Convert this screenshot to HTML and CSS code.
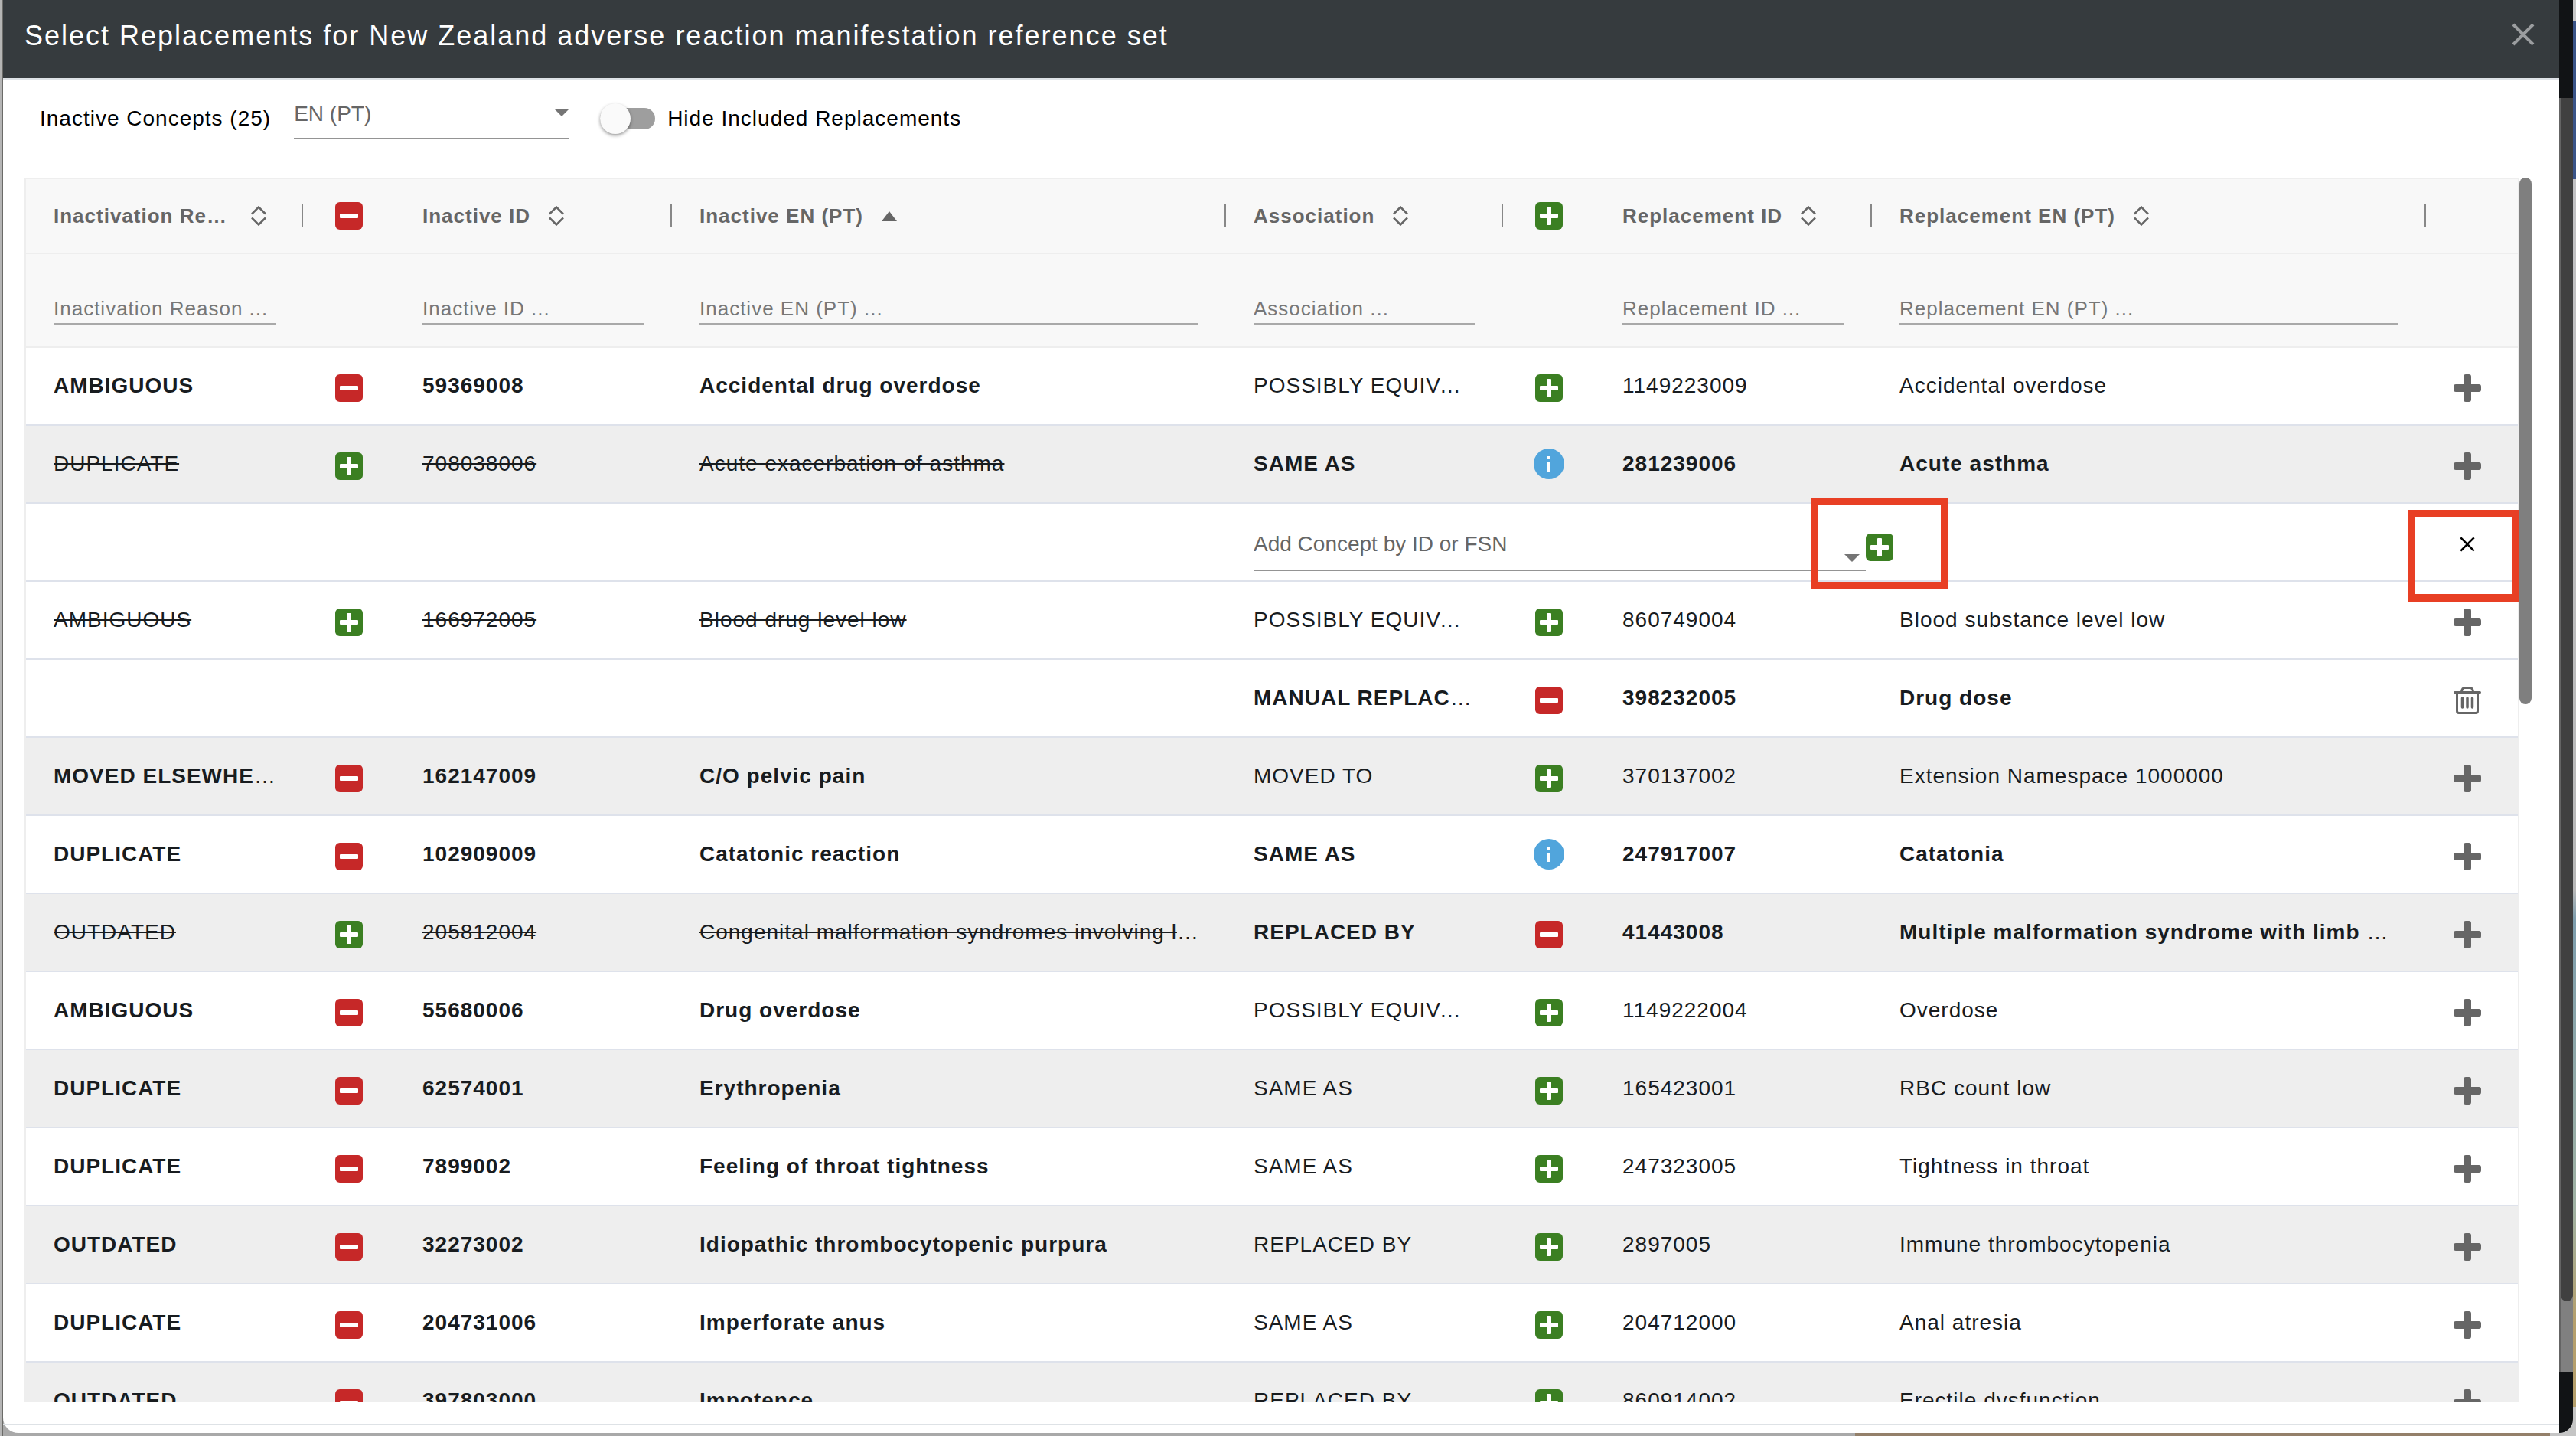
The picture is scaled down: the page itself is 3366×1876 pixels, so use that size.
FILE: index.html
```
<!DOCTYPE html>
<html lang="en">
<head>
  <meta charset="utf-8">
  <title>Select Replacements</title>
  <link rel="stylesheet" href="styles.css">
</head>
<body>
  <svg class="sprite" aria-hidden="true">
    <symbol id="minus-square" viewBox="0 0 36 36">
      <rect width="36" height="36" rx="6" fill="#c62828"/>
      <rect x="6" y="15" width="24" height="6" rx="1" fill="#fff"/>
    </symbol>
    <symbol id="plus-square" viewBox="0 0 36 36">
      <rect width="36" height="36" rx="6" fill="#3b7f22"/>
      <path d="M15 7q0-1 1-1h4q1 0 1 1v8h8q1 0 1 1v4q0 1-1 1h-8v8q0 1-1 1h-4q-1 0-1-1v-8H7q-1 0-1-1v-4q0-1 1-1h8z" fill="#fff"/>
    </symbol>
    <symbol id="info" viewBox="0 0 40 40">
      <circle cx="20" cy="20" r="20" fill="#51a5dc"/>
      <path d="M18 10h4v4h-4zM18 18h4v12h-4z" fill="#fff"/>
    </symbol>
    <symbol id="plus" viewBox="0 0 36 36">
      <path d="M13 3q0-3 3-3h4q3 0 3 3v10h10q3 0 3 3v4q0 3-3 3H23v10q0 3-3 3h-4q-3 0-3-3V23H3q-3 0-3-3v-4q0-3 3-3h10z" fill="#666"/>
    </symbol>
    <symbol id="trash" viewBox="0 0 36 36">
      <path d="M1.500 7.500h33M4.500 8v24q0 2.500 2.500 2.500h22q2.500 0 2.500-2.500V8M10.500 7q.5-5.500 4-5.500h7q3.500 0 4 5.500" fill="none" stroke="#666" stroke-width="3" stroke-linecap="round"/>
      <path d="M11.500 15v12M18 15v12M24.500 15v12" stroke="#666" stroke-width="3.500" stroke-linecap="round"/>
    </symbol>
    <symbol id="sort" viewBox="0 0 20 26">
      <path d="M1 10.500l9-9 9 9M1 15.500l9 9 9-9" fill="none" stroke="#666" stroke-width="2.500"/>
    </symbol>
    <symbol id="sort-asc" viewBox="0 0 20 26">
      <path d="M0 20L10 7l10 13z" fill="#666"/>
    </symbol>
    <symbol id="cross" viewBox="0 0 30 30">
      <path d="M2 2l26 26M28 2L2 28" fill="none" stroke="currentColor" stroke-width="4"/>
    </symbol>
  </svg>

  <div class="modal">
    <header class="modal-header">
      <h1>Select Replacements for New Zealand adverse reaction manifestation reference set</h1>
      <button class="close" aria-label="Close"><svg><use href="#cross"/></svg></button>
    </header>

    <div class="modal-body">
      <div class="toolbar">
        <label for="language">Inactive Concepts (25)</label>
        <select id="language" class="field language">
          <option>EN (PT)</option>
        </select>
        <label class="toggle"><input type="checkbox"> Hide Included Replacements</label>
      </div>

      <div class="table-wrap">
        <table>
          <colgroup>
            <col class="c-text"><col class="c-icon"><col class="c-text"><col>
            <col class="c-text"><col class="c-icon"><col class="c-text"><col><col class="c-icon">
          </colgroup>
          <thead>
            <tr class="titles">
              <th class="sep"><div><span>Inactivation Reason</span><svg><use href="#sort"/></svg></div></th>
              <th class="icon"><svg class="i"><use href="#minus-square"/></svg></th>
              <th class="sep"><div><span>Inactive ID</span><svg><use href="#sort"/></svg></div></th>
              <th class="sep"><div><span>Inactive EN (PT)</span><svg><use href="#sort-asc"/></svg></div></th>
              <th class="sep"><div><span>Association</span><svg><use href="#sort"/></svg></div></th>
              <th class="icon"><svg class="i"><use href="#plus-square"/></svg></th>
              <th class="sep"><div><span>Replacement ID</span><svg><use href="#sort"/></svg></div></th>
              <th class="sep"><div><span>Replacement EN (PT)</span><svg><use href="#sort"/></svg></div></th>
              <th></th>
            </tr>
            <tr class="filters">
              <th><input type="text" aria-label="Inactivation Reason" placeholder="Inactivation Reason ..."></th>
              <th></th>
              <th><input type="text" aria-label="Inactive ID" placeholder="Inactive ID ..."></th>
              <th><input type="text" aria-label="Inactive EN (PT)" placeholder="Inactive EN (PT) ..."></th>
              <th><input type="text" aria-label="Association" placeholder="Association ..."></th>
              <th></th>
              <th><input type="text" aria-label="Replacement ID" placeholder="Replacement ID ..."></th>
              <th><input type="text" aria-label="Replacement EN (PT)" placeholder="Replacement EN (PT) ..."></th>
              <th></th>
            </tr>
          </thead>
          <tbody>
            <tr>
              <td><b>AMBIGUOUS</b></td>
              <td class="icon"><button aria-label="Remove"><svg class="i"><use href="#minus-square"/></svg></button></td>
              <td><b>59369008</b></td>
              <td><b>Accidental drug overdose</b></td>
              <td>POSSIBLY EQUIVALENT TO</td>
              <td class="icon"><button aria-label="Include"><svg class="i"><use href="#plus-square"/></svg></button></td>
              <td>1149223009</td>
              <td>Accidental overdose</td>
              <td class="action"><button aria-label="Add replacement"><svg class="i"><use href="#plus"/></svg></button></td>
            </tr>
            <tr class="alt">
              <td><s>DUPLICATE</s></td>
              <td class="icon"><button aria-label="Include"><svg class="i"><use href="#plus-square"/></svg></button></td>
              <td><s>708038006</s></td>
              <td><s>Acute exacerbation of asthma</s></td>
              <td><b>SAME AS</b></td>
              <td class="icon"><svg class="info"><use href="#info"/></svg></td>
              <td><b>281239006</b></td>
              <td><b>Acute asthma</b></td>
              <td class="action"><button aria-label="Add replacement"><svg class="i"><use href="#plus"/></svg></button></td>
            </tr>
            <tr class="adding">
              <td></td>
              <td></td>
              <td></td>
              <td></td>
              <td colspan="4">
                <div class="add-concept">
                  <select class="field" aria-label="Add Concept by ID or FSN">
                    <option>Add Concept by ID or FSN</option>
                  </select>
                  <button aria-label="Add concept"><svg class="i"><use href="#plus-square"/></svg></button>
                  <span class="highlight highlight-add"></span>
                </div>
              </td>
              <td class="action">
                <button class="cancel" aria-label="Cancel"><svg><use href="#cross"/></svg></button>
                <span class="highlight highlight-cancel"></span>
              </td>
            </tr>
            <tr>
              <td><s>AMBIGUOUS</s></td>
              <td class="icon"><button aria-label="Include"><svg class="i"><use href="#plus-square"/></svg></button></td>
              <td><s>166972005</s></td>
              <td><s>Blood drug level low</s></td>
              <td>POSSIBLY EQUIVALENT TO</td>
              <td class="icon"><button aria-label="Include"><svg class="i"><use href="#plus-square"/></svg></button></td>
              <td>860749004</td>
              <td>Blood substance level low</td>
              <td class="action"><button aria-label="Add replacement"><svg class="i"><use href="#plus"/></svg></button></td>
            </tr>
            <tr>
              <td></td>
              <td></td>
              <td></td>
              <td></td>
              <td><b>MANUAL REPLACEMENT</b></td>
              <td class="icon"><button aria-label="Remove"><svg class="i"><use href="#minus-square"/></svg></button></td>
              <td><b>398232005</b></td>
              <td><b>Drug dose</b></td>
              <td class="action"><button aria-label="Delete"><svg class="i"><use href="#trash"/></svg></button></td>
            </tr>
            <tr class="alt">
              <td><b>MOVED ELSEWHERE</b></td>
              <td class="icon"><button aria-label="Remove"><svg class="i"><use href="#minus-square"/></svg></button></td>
              <td><b>162147009</b></td>
              <td><b>C/O pelvic pain</b></td>
              <td>MOVED TO</td>
              <td class="icon"><button aria-label="Include"><svg class="i"><use href="#plus-square"/></svg></button></td>
              <td>370137002</td>
              <td>Extension Namespace 1000000</td>
              <td class="action"><button aria-label="Add replacement"><svg class="i"><use href="#plus"/></svg></button></td>
            </tr>
            <tr>
              <td><b>DUPLICATE</b></td>
              <td class="icon"><button aria-label="Remove"><svg class="i"><use href="#minus-square"/></svg></button></td>
              <td><b>102909009</b></td>
              <td><b>Catatonic reaction</b></td>
              <td><b>SAME AS</b></td>
              <td class="icon"><svg class="info"><use href="#info"/></svg></td>
              <td><b>247917007</b></td>
              <td><b>Catatonia</b></td>
              <td class="action"><button aria-label="Add replacement"><svg class="i"><use href="#plus"/></svg></button></td>
            </tr>
            <tr class="alt">
              <td><s>OUTDATED</s></td>
              <td class="icon"><button aria-label="Include"><svg class="i"><use href="#plus-square"/></svg></button></td>
              <td><s>205812004</s></td>
              <td><s>Congenital malformation syndromes involving limbs</s></td>
              <td><b>REPLACED BY</b></td>
              <td class="icon"><button aria-label="Remove"><svg class="i"><use href="#minus-square"/></svg></button></td>
              <td><b>41443008</b></td>
              <td><b>Multiple malformation syndrome with limb defect</b></td>
              <td class="action"><button aria-label="Add replacement"><svg class="i"><use href="#plus"/></svg></button></td>
            </tr>
            <tr>
              <td><b>AMBIGUOUS</b></td>
              <td class="icon"><button aria-label="Remove"><svg class="i"><use href="#minus-square"/></svg></button></td>
              <td><b>55680006</b></td>
              <td><b>Drug overdose</b></td>
              <td>POSSIBLY EQUIVALENT TO</td>
              <td class="icon"><button aria-label="Include"><svg class="i"><use href="#plus-square"/></svg></button></td>
              <td>1149222004</td>
              <td>Overdose</td>
              <td class="action"><button aria-label="Add replacement"><svg class="i"><use href="#plus"/></svg></button></td>
            </tr>
            <tr class="alt">
              <td><b>DUPLICATE</b></td>
              <td class="icon"><button aria-label="Remove"><svg class="i"><use href="#minus-square"/></svg></button></td>
              <td><b>62574001</b></td>
              <td><b>Erythropenia</b></td>
              <td>SAME AS</td>
              <td class="icon"><button aria-label="Include"><svg class="i"><use href="#plus-square"/></svg></button></td>
              <td>165423001</td>
              <td>RBC count low</td>
              <td class="action"><button aria-label="Add replacement"><svg class="i"><use href="#plus"/></svg></button></td>
            </tr>
            <tr>
              <td><b>DUPLICATE</b></td>
              <td class="icon"><button aria-label="Remove"><svg class="i"><use href="#minus-square"/></svg></button></td>
              <td><b>7899002</b></td>
              <td><b>Feeling of throat tightness</b></td>
              <td>SAME AS</td>
              <td class="icon"><button aria-label="Include"><svg class="i"><use href="#plus-square"/></svg></button></td>
              <td>247323005</td>
              <td>Tightness in throat</td>
              <td class="action"><button aria-label="Add replacement"><svg class="i"><use href="#plus"/></svg></button></td>
            </tr>
            <tr class="alt">
              <td><b>OUTDATED</b></td>
              <td class="icon"><button aria-label="Remove"><svg class="i"><use href="#minus-square"/></svg></button></td>
              <td><b>32273002</b></td>
              <td><b>Idiopathic thrombocytopenic purpura</b></td>
              <td>REPLACED BY</td>
              <td class="icon"><button aria-label="Include"><svg class="i"><use href="#plus-square"/></svg></button></td>
              <td>2897005</td>
              <td>Immune thrombocytopenia</td>
              <td class="action"><button aria-label="Add replacement"><svg class="i"><use href="#plus"/></svg></button></td>
            </tr>
            <tr>
              <td><b>DUPLICATE</b></td>
              <td class="icon"><button aria-label="Remove"><svg class="i"><use href="#minus-square"/></svg></button></td>
              <td><b>204731006</b></td>
              <td><b>Imperforate anus</b></td>
              <td>SAME AS</td>
              <td class="icon"><button aria-label="Include"><svg class="i"><use href="#plus-square"/></svg></button></td>
              <td>204712000</td>
              <td>Anal atresia</td>
              <td class="action"><button aria-label="Add replacement"><svg class="i"><use href="#plus"/></svg></button></td>
            </tr>
            <tr class="alt">
              <td><b>OUTDATED</b></td>
              <td class="icon"><button aria-label="Remove"><svg class="i"><use href="#minus-square"/></svg></button></td>
              <td><b>397803000</b></td>
              <td><b>Impotence</b></td>
              <td>REPLACED BY</td>
              <td class="icon"><button aria-label="Include"><svg class="i"><use href="#plus-square"/></svg></button></td>
              <td>860914002</td>
              <td>Erectile dysfunction</td>
              <td class="action"><button aria-label="Add replacement"><svg class="i"><use href="#plus"/></svg></button></td>
            </tr>
          </tbody>
        </table>
        <div class="thumb"></div>
      </div>
    </div>
    <footer class="modal-footer"></footer>
  </div>
  <div class="page-scroll"><div class="page-track"><div class="page-thumb"></div></div></div>
</body>
</html>
```
FILE: styles.css
```
* {
  box-sizing: border-box;
}

body {
  margin: 0;
  height: 100vh;
  display: flex;
  overflow: hidden;
  padding: 0 4px 4px;
  /* what shows round the dialog: left edge, right edge, bottom edge */
  background:
    linear-gradient(90deg, #b5b5b5 50%, #6b6b68 50%) left / 4px 100% no-repeat,
    linear-gradient(#c8c8c8 1.5%, #3a5488 1.5%, #3a5488 12.5%, #c2c2c4 12.5%, #b8b8b8 62%, #7d9dad 64%, #a0b2a4 84%, #b59f6c 92%, #b59f6c 98%, #c5c5c5 98%) right / 4px 100% no-repeat,
    linear-gradient(90deg, #a9a9a9 72%, #94806a 72%, #94806a 99%, #c5c5c5 99%);
  color: #181c1f;
  font-family: "Helvetica Neue", "Liberation Sans", Arial, sans-serif;
  font-size: 28px;
}

button {
  display: block;
  padding: 0;
  border: none;
  background: none;
  color: inherit;
  cursor: pointer;
}

svg {
  display: block;
}

.sprite {
  position: absolute;
  width: 0;
  height: 0;
}

.i {
  width: 36px;
  height: 36px;
}

.info {
  width: 40px;
  height: 40px;
}

/* dialog */

.modal {
  flex: 1;
  min-width: 0;
  display: flex;
  flex-direction: column;
  background: #fff;
  border-bottom-left-radius: 20px;
}

.modal-header {
  display: flex;
  justify-content: space-between;
  align-items: center;
  height: 104px;
  padding: 0 32px 8px 28px;
  background: #363b3e;
  border-bottom: 2px solid #dee2e6;
  color: #fff;
}

.modal-header h1 {
  margin: 0;
  font-size: 36px;
  font-weight: normal;
  letter-spacing: 2px;
}

.close {
  margin-bottom: 4px;
  color: #9b9d9f;
}

.close svg {
  width: 30px;
  height: 30px;
}

.modal-body {
  flex: 1;
  min-height: 0;
  display: flex;
  flex-direction: column;
  padding: 0 36px 28px 28px;
}

.modal-footer {
  height: 12px;
  border-top: 2px solid #dee2e6;
}

/* toolbar */

.toolbar {
  display: flex;
  align-items: center;
  height: 128px;
  padding: 0 20px 26px;
  color: #000;
  letter-spacing: 1px;
}

.field {
  appearance: none;
  border: none;
  border-bottom: 2px solid #949494;
  border-radius: 0;
  background: url("data:image/svg+xml,%3Csvg xmlns='http://www.w3.org/2000/svg' width='20' height='10'%3E%3Cpath d='M0 0h20L10 10z' fill='%23757575'/%3E%3C/svg%3E") no-repeat;
  color: #666;
  font-family: inherit;
  font-size: 28px;
}

.language {
  width: 360px;
  height: 56px;
  margin: 0 40px 2px 30px;
  padding-bottom: 10px;
  background-position: right 16px;
}

.toggle {
  display: flex;
  align-items: center;
  gap: 16px;
}

.toggle input {
  appearance: none;
  position: relative;
  width: 72px;
  height: 28px;
  margin: 0;
  border-radius: 14px;
  background: #9e9e9e;
}

.toggle input::before {
  content: "";
  position: absolute;
  top: -6px;
  left: 0;
  width: 40px;
  height: 40px;
  border-radius: 50%;
  background: #fafafa;
  box-shadow: 0 2px 4px rgba(0, 0, 0, 0.4);
}

/* table */

.table-wrap {
  position: relative;
  flex: 1;
  min-height: 0;
  overflow: hidden;
  padding-right: 16px;
}

.thumb {
  position: absolute;
  top: 0;
  right: 0;
  width: 16px;
  height: 43%;
  border-radius: 8px;
  background: #7f7f7f;
}

table {
  width: 100%;
  table-layout: fixed;
  border-collapse: separate;
  border-spacing: 0;
  border: 2px solid #eee;
  letter-spacing: 1px;
}

.c-text {
  width: 362px;
}

.c-icon {
  width: 120px;
}

th,
td {
  padding: 0 36px;
  text-align: left;
  white-space: nowrap;
  overflow: hidden;
  text-overflow: ellipsis;
}

th {
  height: 98px;
  border-bottom: 2px solid #eee;
  background: #f8f8f8;
  color: #666;
  font-size: 26px;
}

td {
  height: 102px;
  border-bottom: 2px solid #dee2eb;
}

.alt td {
  background: #eee;
}

.sep {
  background: #f8f8f8 linear-gradient(#888, #888) right center / 2px 30px no-repeat;
}

.titles div {
  display: flex;
  align-items: center;
}

.titles span {
  overflow: hidden;
  text-overflow: ellipsis;
}

.titles div svg {
  flex: none;
  width: 20px;
  height: 26px;
  margin: 0 12px 0 24px;
}

.icon {
  padding: 0;
}

.icon svg {
  margin: 0 auto;
}

.icon button {
  margin: 6px auto 0;
}

.action {
  padding: 0 0 0 36px;
}

.action button {
  margin-top: 6px;
}

.filters th {
  height: 122px;
  padding-bottom: 28px;
  vertical-align: bottom;
}

.filters input {
  display: block;
  width: 100%;
  height: 40px;
  padding: 0;
  border: none;
  border-bottom: 2px solid #a9a9a9;
  background: none;
  color: #666;
  font-family: inherit;
  font-size: 26px;
  letter-spacing: 1px;
}

.filters input::placeholder {
  color: #777;
}

/* row with the concept picker open */

.adding td {
  position: relative;
  overflow: visible;
}

.add-concept {
  display: flex;
  align-items: center;
  position: relative;
}

.add-concept .field {
  width: 800px;
  height: 76px;
  padding-top: 6px;
  background-position: right 8px top 54px;
}

.add-concept button {
  margin-top: 14px;
}

.cancel {
  width: 36px;
  color: #000;
}

.cancel svg {
  width: 20px;
  height: 20px;
  margin: 0 auto;
}

.highlight {
  position: absolute;
  z-index: 1;
  height: 120px;
  border: 10px solid #e83f24;
  pointer-events: none;
}

.highlight-add {
  left: 728px;
  top: -20px;
  width: 180px;
}

.highlight-cancel {
  left: -24px;
  top: 8px;
  width: 146px;
}

/* scrollbar of the page behind */

.page-scroll {
  width: 18px;
  padding: 128px 0 80px;
  background: #111315;
  border-bottom-right-radius: 18px;
}

.page-track {
  height: 100%;
  border-left: 2px solid #646464;
  background: #808080;
}

.page-thumb {
  height: 94.5%;
  border-radius: 0 0 8px 8px;
  background: #404040;
}
```
